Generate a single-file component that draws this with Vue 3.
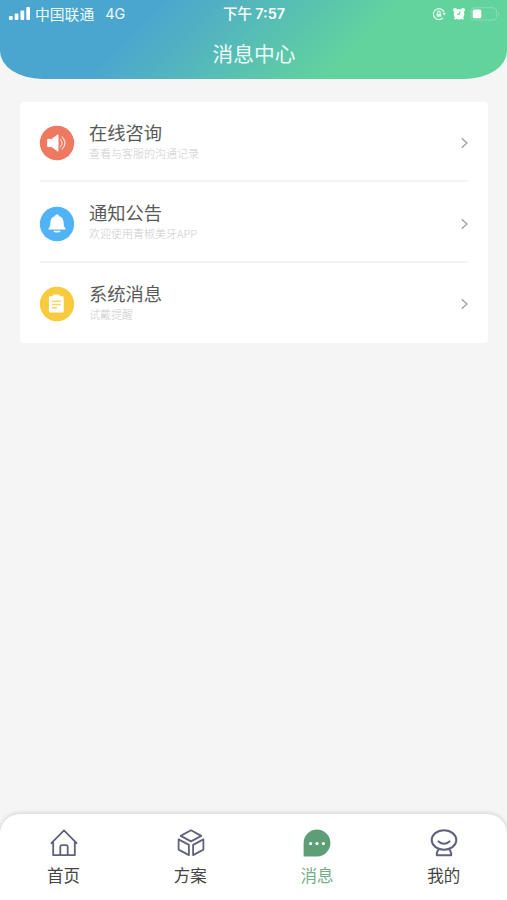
<script setup>
const messages = [
  { id: 'consult', title: '在线咨询', note: '查看与客服的沟通记录', color: '#ee7860' },
  { id: 'notice', title: '通知公告', note: '欢迎使用青椒美牙APP', color: '#4fb3f6' },
  { id: 'system', title: '系统消息', note: '试戴提醒', color: '#f8cb3e' },
]
const tabs = [
  { id: 'home', label: '首页' },
  { id: 'plan', label: '方案' },
  { id: 'message', label: '消息' },
  { id: 'mine', label: '我的' },
]
const active = 'message'
</script>

<template>
  <div class="screen">
    <header class="header">
      <div class="status">
        <div class="carrier">
          <svg class="signal" width="22" height="14" viewBox="0 0 22 14" fill="#fff">
            <rect x="0" y="9" width="3.7" height="4" rx="1" />
            <rect x="5.7" y="6.5" width="3.7" height="6.5" rx="1" />
            <rect x="11.5" y="3.5" width="3.7" height="9.5" rx="1" />
            <rect x="17.3" y="0" width="3.7" height="13" rx="1" />
          </svg>
          <span class="operator">中国联通</span>
          <span class="network">4G</span>
        </div>
        <div class="time">下午 <b>7:57</b></div>
        <div class="indicators">
          <svg width="14" height="14" viewBox="0 0 14 14" fill="none" stroke="#dffaec" stroke-width="1.2">
            <path d="M12.2 5.6A5.5 5.5 0 1 0 11.2 10.6" />
            <path d="M10.4 6h3.4l-1.6 2.4z" fill="#dffaec" stroke="none" />
            <rect x="4.6" y="6.4" width="4.6" height="3.4" rx=".5" fill="#dffaec" stroke="none" />
            <path d="M5.5 6.6V5.5a1.4 1.4 0 0 1 2.8 0v1.1" />
          </svg>
          <svg width="14" height="14" viewBox="0 0 14 14" fill="#f4fff9">
            <circle cx="7" cy="7.2" r="5.3" />
            <circle cx="3" cy="3" r="2" />
            <circle cx="11" cy="3" r="2" />
            <path d="M2.6 12.2l2-2M11.4 12.2l-2-2" stroke="#f4fff9" stroke-width="1.8" />
            <path d="M8.2 4.6L7 7.7 5 7" fill="none" stroke="#5fd09b" stroke-width="1" />
          </svg>
          <svg width="30" height="14" viewBox="0 0 30 14">
            <rect x="1" y=".8" width="25.6" height="12.2" rx="3.2" fill="none" stroke="#86deb3" stroke-width="1" />
            <rect x="2.7" y="2.5" width="8.6" height="8.8" rx="1.6" fill="#fff" />
            <path d="M28 5v4q1.4-.6 1.4-2t-1.4-2z" fill="#86deb3" />
          </svg>
        </div>
      </div>
      <h1 class="title">消息中心</h1>
    </header>

    <main class="content">
      <ul class="card">
        <li v-for="m in messages" :key="m.id" class="row">
          <svg class="badge" width="36" height="36" viewBox="0 0 36 36">
            <circle cx="18" cy="18" r="17.2" :fill="m.color" />
            <g v-if="m.id === 'consult'">
              <path d="M8.7 14.4h4l6.3-4.6v16.4l-6.3-4.6h-4z" fill="#fff" stroke="#fff" stroke-width="1" stroke-linejoin="round" />
              <path d="M21.4 14.4q3.2 3.6 0 7.2M23.2 12q5.6 6 0 12" fill="none" stroke="#fbd5cc" stroke-width="1.3" stroke-linecap="round" />
            </g>
            <g v-else-if="m.id === 'notice'" fill="#fff">
              <path d="M18 8.6c1.2 0 1.8.7 2 1.5 3 .9 4.4 3.2 4.6 6.3.2 3 .4 4.6 2 6.3v.9H9.4v-.9c1.6-1.7 1.8-3.3 2-6.3.2-3.1 1.6-5.4 4.6-6.3.2-.8.8-1.5 2-1.5z" />
              <path d="M14.2 24.7h7.6q-.8 1.9-3.8 1.9t-3.8-1.9z" />
            </g>
            <g v-else>
              <path d="M11.1 10.3h2.7V9.4q0-1 1-1h5q1 0 1 1v.9h2.7q1.2 0 1.2 1.2v13.8q0 1.2-1.2 1.2H11.1q-1.2 0-1.2-1.2V11.5q0-1.2 1.2-1.2z" fill="#fff" />
              <path d="M13 15.2h8.8M13 18.5h8.8M13 21.8h5" stroke="#f8d566" stroke-width="1.4" />
            </g>
          </svg>
          <div class="text">
            <div class="name">{{ m.title }}</div>
            <div class="note">{{ m.note }}</div>
          </div>
          <svg class="arrow" width="8" height="12" viewBox="0 0 8 12" fill="none" stroke="#a6a6a6" stroke-width="1.5">
            <path d="M1.8 1.2L6.8 6 1.8 10.8" />
          </svg>
        </li>
      </ul>
    </main>

    <nav class="tabs">
      <div v-for="t in tabs" :key="t.id" class="tab" :class="{ active: t.id === active }">
        <svg width="30" height="30" viewBox="0 0 30 30" fill="none" stroke="#5f627d" stroke-width="1.8" stroke-linejoin="round" stroke-linecap="round">
          <g v-if="t.id === 'home'">
            <path d="M2.4 15.2L15 2.4l12.6 12.8M4.2 13.8v13.4h21.6V13.8M11.3 27v-8q0-1.8 1.8-1.8h3.8q1.8 0 1.8 1.8v8" />
          </g>
          <g v-else-if="t.id === 'plan'">
            <path d="M15 2.2l10.3 5.7L15 13.4 4.7 7.9z" />
            <path d="M2.6 11.4l10.3 5.5v10.2L2.6 21.6zM27.4 11.4l-10.3 5.5v10.2l10.3-5.5z" />
          </g>
          <g v-else-if="t.id === 'message'" stroke="none">
            <path d="M15 1.6a13.4 13.4 0 0 1 0 26.8H1.6V15A13.4 13.4 0 0 1 15 1.6z" fill="#5d9e76" />
            <g fill="#fff"><circle cx="8.6" cy="15.6" r="1.6" /><circle cx="15" cy="15.6" r="1.6" /><circle cx="21.4" cy="15.6" r="1.6" /></g>
          </g>
          <g v-else stroke-width="2">
            <ellipse cx="15" cy="12" rx="12.3" ry="9.7" />
            <path d="M9.5 13.4q5.5 4.6 11 0M10.6 20.8Q7.8 22.4 7.8 27.2h14.4Q22.2 22.4 19.4 20.8" />
          </g>
        </svg>
        <span>{{ t.label }}</span>
      </div>
    </nav>
  </div>
</template>

<style>
body { background: #f5f5f5; }
</style>

<style scoped>
.screen {
  display: flex;
  flex-direction: column;
  height: 900px;
  overflow: hidden;
  background: #f5f5f5;
  font-family: "Noto Sans CJK SC", sans-serif;
}
.header {
  height: 79px;
  flex: none;
  color: #fff;
  border-radius: 0 0 42px 42px / 0 0 28px 28px;
  background: linear-gradient(135deg, #4ba6cf 28%, #62d39d 69%);
}
.status {
  display: grid;
  grid-template-columns: 1fr auto 1fr;
  align-items: center;
  height: 27px;
  padding: 0 8px 0 9px;
  font-size: 14.8px;
  line-height: 27px;
}
.carrier { display: flex; align-items: center; height: 25px; line-height: 25px; color: #eefafc; }
.operator { margin-left: 4px; }
.network { margin-left: 11px; font-family: Inter, sans-serif; font-size: 14.4px; }
.time { height: 27px; line-height: 25px; font-size: 14.5px; font-weight: 500; white-space: pre; }
.time b { font-family: Inter, sans-serif; font-size: 14.4px; font-weight: 600; }
.indicators { display: flex; justify-content: flex-end; align-items: center; gap: 6px; }
.indicators svg:last-child { margin-left: -2px; margin-right: -1px; }
.title {
  margin: 11px 0 0 1px;
  font-size: 20.7px;
  line-height: 30px;
  font-weight: 400;
  text-align: center;
  color: #edfbf7;
}
.content { flex: 1; padding: 22.5px 19.5px 0 20px; }
.card {
  list-style: none;
  margin: 0;
  padding: 0 20px;
  height: 241px;
  box-sizing: border-box;
  border-radius: 4px;
  background: #fff;
}
.row {
  display: flex;
  align-items: center;
  box-sizing: border-box;
  height: 80.5px;
  padding-top: 2px;
  border-bottom: 2px solid #f3f3f3;
}
.row:last-child { border-bottom-color: transparent; }
.badge { margin-left: -1px; margin-top: 3px; }
.text { flex: 1; margin-left: 14px; margin-top: -2px; }
.name { font-size: 18.3px; line-height: 25px; font-weight: 400; color: #5a5a5a; }
.note { font-size: 11px; line-height: 17px; font-weight: 300; color: #ccc; }
.arrow { margin-top: 3px; }
.tabs {
  flex: none;
  display: grid;
  grid-template-columns: repeat(4, 1fr);
  height: 86px;
  border-radius: 20px 20px 0 0;
  background: #fff;
  box-shadow: 0 -1px 4px rgba(0, 0, 0, .15);
}
.tab {
  display: flex;
  flex-direction: column;
  align-items: center;
  padding: 14px 0 0 1px;
  font-size: 16.5px;
  line-height: 24px;
  color: #444;
}
.tab span { margin-top: 5px; margin-right: 1px; }
.tab.active { color: #74ad8b; }
</style>
